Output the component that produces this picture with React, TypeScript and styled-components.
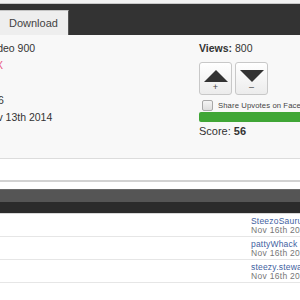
import styled, { createGlobalStyle } from 'styled-components';

const GlobalStyle = createGlobalStyle`
    html, body {
        margin: 0;
        padding: 0;
        background: #ffffff;
    }
    body {
        font-family: "Liberation Sans", Arial, sans-serif;
        color: #333333;
    }
`;

interface DetailLine {
    text: string;
    indent: number;
    color?: string;
}

interface Comment {
    name: string;
    date: string;
}

const Page = styled.div`
    width: 300px;
    height: 300px;
    overflow: hidden;
    display: flex;
    flex-direction: column;
`;

const TopStrip = styled.div`
    height: 3px;
    flex-shrink: 0;
    background: #f2f2f2;
    border-bottom: 1px solid #c8c8c8;
`;

const TabBar = styled.div`
    height: 31px;
    flex-shrink: 0;
    background: #333333;
    display: flex;
    align-items: flex-end;
`;

const Tab = styled.div`
    height: 24px;
    margin-left: -1px;
    padding: 0 10px 0 9px;
    background: #eeeeee;
    border: 1px solid #c4c4c4;
    border-right-color: #555555;
    border-bottom: none;
    display: flex;
    align-items: center;
    font-size: 11px;
    color: #444444;
`;

const Details = styled.div`
    height: 123px;
    flex-shrink: 0;
    background: #f8f8f8;
    border-bottom: 1px solid #dcdcdc;
    display: flex;
    flex-direction: row;
`;

const LeftCol = styled.div`
    width: 199px;
    flex-shrink: 0;
    padding-top: 5px;
    display: flex;
    flex-direction: column;
    overflow: hidden;
`;

const Line = styled.div<{ $indent: number; $color?: string }>`
    height: 17.3px;
    line-height: 17.3px;
    font-size: 10.5px;
    white-space: nowrap;
    margin-left: ${props => props.$indent}px;
    color: ${props => props.$color ?? '#333333'};
`;

const RightCol = styled.div`
    width: 120px;
    flex-shrink: 0;
    padding-top: 5px;
    display: flex;
    flex-direction: column;
`;

const Stat = styled.div`
    height: 17px;
    line-height: 17px;
    font-size: 10.5px;
    color: #333333;
    white-space: nowrap;

    & b {
        font-weight: 700;
    }
`;

const VoteRow = styled.div`
    margin-top: 5px;
    display: flex;
    flex-direction: row;
    gap: 3px;
`;

const VoteButton = styled.div<{ $down?: boolean }>`
    width: 33px;
    height: 33px;
    box-sizing: border-box;
    border: 1px solid #c8c8c8;
    border-radius: 3px;
    background: linear-gradient(#ffffff, #ececec);
    display: flex;
    flex-direction: ${props => (props.$down ? 'column' : 'column')};
    align-items: center;
    padding-top: 7px;
    gap: 1px;
`;

const Sign = styled.div`
    font-size: 9px;
    line-height: 8px;
    color: #444444;
`;

const ShareRow = styled.div`
    margin-top: 4px;
    height: 12px;
    display: flex;
    align-items: center;
    gap: 5px;
    padding-left: 3px;
    white-space: nowrap;
`;

const CheckBox = styled.span`
    width: 9px;
    height: 9px;
    flex-shrink: 0;
    border: 1px solid #a8a8a8;
    border-radius: 2px;
    background: linear-gradient(#f4f4f4, #dedede);
`;

const ShareLabel = styled.span`
    font-size: 7.7px;
    color: #444444;
    letter-spacing: 0.1px;
`;

const ScoreBar = styled.div`
    margin-top: 1px;
    height: 10px;
    width: 110px;
    border-radius: 2px;
    background: #40a636;
`;

const Score = styled(Stat)`
    margin-top: 1px;
    font-size: 11px;
`;

const CommentBox = styled.div`
    height: 21px;
    flex-shrink: 0;
    background: #ffffff;
    border-bottom: 2px solid #d2d2d2;
`;

const ListHeader = styled.div`
    margin-top: 7px;
    height: 23px;
    flex-shrink: 0;
    background: linear-gradient(#555555 0, #555555 12px, #2b2b2b 12px, #2b2b2b 100%);
    border-top: 1px solid #6a6a6a;
    border-bottom: 1px solid #d8d8d8;
`;

const CommentRow = styled.div`
    height: 23px;
    flex-shrink: 0;
    box-sizing: border-box;
    padding: 2px 0 0 251px;
    border-bottom: 1px solid #e6e6e6;
    display: flex;
    flex-direction: column;
    white-space: nowrap;

    &:first-child {
        height: 28px;
        padding-top: 7px;
    }
`;

const CommentName = styled.div`
    font-size: 8.5px;
    line-height: 10px;
    color: #3f5f9f;
    letter-spacing: 0.2px;
`;

const CommentDate = styled.div`
    font-size: 8.5px;
    line-height: 9px;
    color: #777777;
    letter-spacing: 0.3px;
`;

function Triangle({ down }: { down?: boolean }) {
    return (
        <svg width="24" height="12" viewBox="0 0 24 12">
            <polygon points={down ? '0,0 24,0 12,12' : '12,0 24,12 0,12'} fill="#333333" />
        </svg>
    );
}

const details: Array<DetailLine> = [
    { text: 'Video 900', indent: -12 },
    { text: 'X', indent: -4, color: '#e8577f' },
    { text: '', indent: 0 },
    { text: '6', indent: -2 },
    { text: 'Nov 13th 2014', indent: -16 },
];

const comments: Array<Comment> = [
    { name: 'SteezoSaurus', date: 'Nov 16th 2014' },
    { name: 'pattyWhack', date: 'Nov 16th 2014' },
    { name: 'steezy.stewart', date: 'Nov 16th 2014' },
];

export default function App() {
    return (
        <>
            <GlobalStyle />
            <Page>
                <TopStrip />
                <TabBar>
                    <Tab>Download</Tab>
                </TabBar>
                <Details>
                    <LeftCol>
                        {details.map((line, index) => (
                            <Line $indent={line.indent} $color={line.color} key={index}>
                                {line.text}
                            </Line>
                        ))}
                    </LeftCol>
                    <RightCol>
                        <Stat>
                            <b>Views:</b> 800
                        </Stat>
                        <VoteRow>
                            <VoteButton>
                                <Triangle />
                                <Sign>+</Sign>
                            </VoteButton>
                            <VoteButton $down>
                                <Triangle down />
                                <Sign>–</Sign>
                            </VoteButton>
                        </VoteRow>
                        <ShareRow>
                            <CheckBox />
                            <ShareLabel>Share Upvotes on Facebook</ShareLabel>
                        </ShareRow>
                        <ScoreBar />
                        <Score>
                            Score: <b>56</b>
                        </Score>
                    </RightCol>
                </Details>
                <CommentBox />
                <ListHeader />
                {comments.map((comment, index) => (
                    <CommentRow key={index}>
                        <CommentName>{comment.name}</CommentName>
                        <CommentDate>{comment.date}</CommentDate>
                    </CommentRow>
                ))}
            </Page>
        </>
    );
}
